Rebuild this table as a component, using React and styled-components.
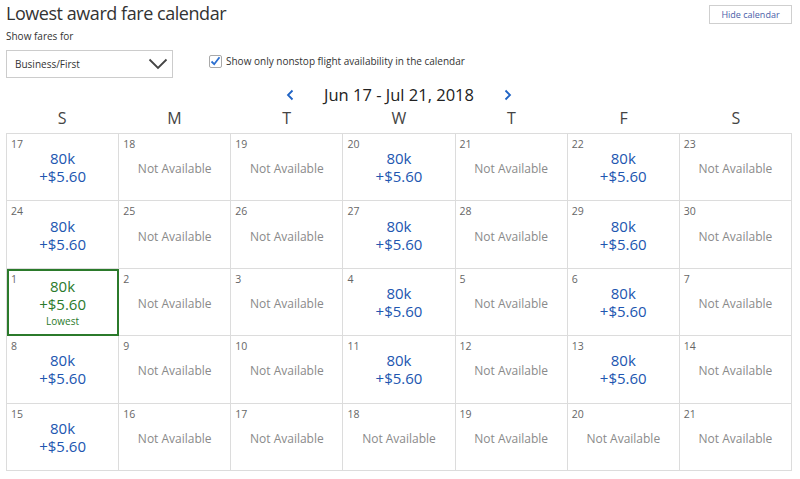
import React from "react";
import styled, { createGlobalStyle } from "styled-components";

const Global = createGlobalStyle`
  html, body { margin: 0; padding: 0; background: #fff; }
  body { font-family: "Open Sans", "Noto Sans", sans-serif; color: #333; }
  * { box-sizing: border-box; }
`;

const Page = styled.div`
  width: 800px;
  height: 479px;
  padding: 0 8px 0 6px;
  overflow: hidden;
`;

const TopBar = styled.div`
  display: flex;
  justify-content: space-between;
  align-items: flex-start;
  height: 28px;
`;

const Title = styled.h1`
  margin: 0;
  font-weight: 400;
  font-size: 18px;
  letter-spacing: -0.45px;
  line-height: 26px;
  color: #333;
`;

const HideButton = styled.button`
  margin-top: 5px;
  width: 83px;
  height: 19px;
  border: 1px solid #cfcfcf;
  background: #fff;
  color: #4a5ea8;
  font-family: "Open Sans", sans-serif;
  font-size: 9px;
  padding: 0;
`;

const Label = styled.div`
  font-size: 10px;
  line-height: 16px;
  color: #333;
`;

const Controls = styled.div`
  display: flex;
  align-items: center;
  gap: 36px;
  margin-top: 6px;
`;

const Select = styled.div`
  width: 167px;
  height: 28px;
  border: 1px solid #cccccc;
  display: flex;
  align-items: center;
  justify-content: space-between;
  padding: 0 4px 0 8px;
  font-size: 10px;
  color: #333;
`;

const CheckRow = styled.label`
  display: flex;
  align-items: center;
  gap: 4px;
  font-size: 10px;
  color: #333;
  margin-top: -6px;
`;

const Box = styled.span`
  width: 13px;
  height: 13px;
  border: 1px solid #a9a9a9;
  border-radius: 2px;
  background: #fff;
  display: flex;
  align-items: center;
  justify-content: center;
`;

const Nav = styled.div`
  display: flex;
  justify-content: center;
  align-items: center;
  gap: 22px;
  height: 22px;
  margin-top: 6px;
`;

const NavArrow = styled.span`
  color: #1f63c4;
  display: flex;
  align-items: center;
`;

const Range = styled.div`
  font-size: 16.5px;
  color: #222;
  line-height: 22px;
  margin: 0 8px;
`;

const Weekdays = styled.div`
  display: grid;
  grid-template-columns: repeat(7, 1fr);
  width: 786px;
  height: 27px;
  padding-top: 1px;
`;

const Weekday = styled.div`
  text-align: center;
  font-size: 16px;
  line-height: 22px;
  color: #444;
`;

const Grid = styled.div`
  display: grid;
  grid-template-columns: repeat(7, 1fr);
  grid-auto-rows: 67.4px;
  width: 786px;
  border-top: 1px solid #dcdcdc;
  border-left: 1px solid #dcdcdc;
`;

const Cell = styled.div`
  display: grid;
  grid-template-areas: "stack";
  border-right: 1px solid #dcdcdc;
  border-bottom: 1px solid #dcdcdc;
  outline: ${(p) => (p.$lowest ? "2px solid #2b7a2b" : "none")};
  outline-offset: -2px;
`;

const DayNum = styled.div`
  grid-area: stack;
  align-self: start;
  justify-self: start;
  font-size: 10.5px;
  line-height: 14px;
  color: #666;
  padding: 3px 0 0 4px;
`;

const Content = styled.div`
  grid-area: stack;
  align-self: center;
  justify-self: center;
  display: flex;
  flex-direction: column;
  align-items: center;
  padding-top: ${(p) => (p.$lowest ? "2px" : "0")};
  color: ${(p) => (p.$lowest ? "#2b7a2b" : "#2156b0")};
`;

const Price = styled.div`
  font-size: 15px;
  line-height: 18px;
`;

const Tag = styled.div`
  font-size: 10px;
  line-height: 14px;
  margin-top: 1px;
`;

const NA = styled.div`
  font-size: 12px;
  color: #8a8a8a;
  line-height: 16px;
  margin-top: 4px;
`;

const days = ["S", "M", "T", "W", "T", "F", "S"];
const weeks = [
  [17, 18, 19, 20, 21, 22, 23],
  [24, 25, 26, 27, 28, 29, 30],
  [1, 2, 3, 4, 5, 6, 7],
  [8, 9, 10, 11, 12, 13, 14],
  [15, 16, 17, 18, 19, 20, 21],
];
const isAvailable = (wi, di) => (wi === 4 ? di === 0 : [0, 3, 5].includes(di));

function Chevron({ dir }) {
  return (
    <svg width="8" height="12" viewBox="0 0 8 12">
      <path
        d={dir === "left" ? "M6.5 1.5 L2 6 L6.5 10.5" : "M1.5 1.5 L6 6 L1.5 10.5"}
        fill="none"
        stroke="currentColor"
        strokeWidth="1.8"
      />
    </svg>
  );
}

export default function App() {
  return (
    <Page>
      <Global />
      <TopBar>
        <Title>Lowest award fare calendar</Title>
        <HideButton>Hide calendar</HideButton>
      </TopBar>
      <Label>Show fares for</Label>
      <Controls>
        <Select>
          <span>Business/First</span>
          <svg width="20" height="12" viewBox="0 0 20 12">
            <path d="M1.5 1.5 L10 10 L18.5 1.5" fill="none" stroke="#444" strokeWidth="1.8" />
          </svg>
        </Select>
        <CheckRow>
          <Box>
            <svg width="11" height="10" viewBox="0 0 11 10">
              <path d="M1.5 5.5 L4.2 8.2 L9.5 1.2" fill="none" stroke="#2b6fd0" strokeWidth="1.8" />
            </svg>
          </Box>
          Show only nonstop flight availability in the calendar
        </CheckRow>
      </Controls>
      <Nav>
        <NavArrow><Chevron dir="left" /></NavArrow>
        <Range>Jun 17 - Jul 21, 2018</Range>
        <NavArrow><Chevron dir="right" /></NavArrow>
      </Nav>
      <Weekdays>
        {days.map((d, i) => (
          <Weekday key={i}>{d}</Weekday>
        ))}
      </Weekdays>
      <Grid>
        {weeks.map((w, wi) =>
          w.map((n, di) => {
            const lowest = wi === 2 && di === 0;
            const avail = isAvailable(wi, di);
            return (
              <Cell key={`${wi}-${di}`} $lowest={lowest}>
                <DayNum>{n}</DayNum>
                {avail ? (
                  <Content $lowest={lowest}>
                    <Price>80k</Price>
                    <Price>+$5.60</Price>
                    {lowest && <Tag>Lowest</Tag>}
                  </Content>
                ) : (
                  <Content>
                    <NA>Not Available</NA>
                  </Content>
                )}
              </Cell>
            );
          })
        )}
      </Grid>
    </Page>
  );
}
